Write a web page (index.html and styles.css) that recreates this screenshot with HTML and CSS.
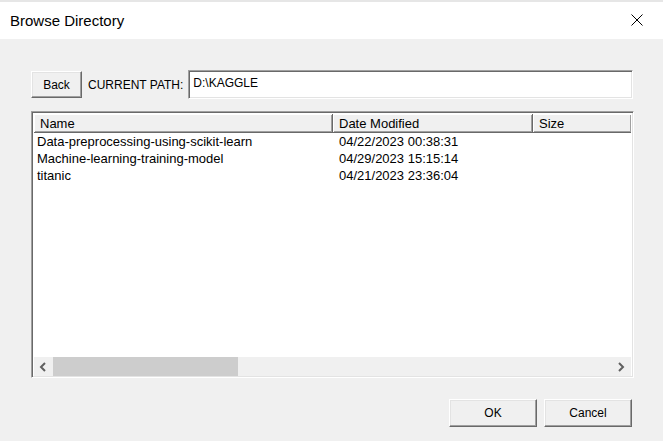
FILE: index.html
```html
<!DOCTYPE html>
<html>
<head>
<meta charset="utf-8">
<link rel="stylesheet" href="styles.css">
</head>
<body>
<div class="window">
  <div class="titlebar">
    <span class="title">Browse Directory</span>
    <svg class="close" width="12" height="12" viewBox="0 0 12 12"><path d="M0.5 0.5 L11.5 11.5 M11.5 0.5 L0.5 11.5" stroke="#000" stroke-width="1" fill="none"/></svg>
  </div>
  <div class="content">
    <div class="pathrow">
      <button class="btn back">Back</button>
      <span class="label">CURRENT PATH:</span>
      <div class="pathbox">D:\KAGGLE</div>
    </div>
    <div class="listview">
      <div class="header">
        <div class="col c-name">Name</div>
        <div class="col c-date">Date Modified</div>
        <div class="col c-size">Size</div>
      </div>
      <div class="rows">
        <div class="row"><span class="c-name">Data-preprocessing-using-scikit-learn</span><span class="c-date">04/22/2023 00:38:31</span></div>
        <div class="row"><span class="c-name">Machine-learning-training-model</span><span class="c-date">04/29/2023 15:15:14</span></div>
        <div class="row"><span class="c-name">titanic</span><span class="c-date">04/21/2023 23:36:04</span></div>
      </div>
      <div class="hscroll">
        <svg class="arrow" width="8" height="10" viewBox="0 0 8 10"><path d="M6 1 L2 5 L6 9" stroke="#606060" stroke-width="2" fill="none"/></svg>
        <div class="track"><div class="thumb"></div></div>
        <svg class="arrow" width="8" height="10" viewBox="0 0 8 10"><path d="M2 1 L6 5 L2 9" stroke="#606060" stroke-width="2" fill="none"/></svg>
      </div>
    </div>
    <div class="footer">
      <button class="btn ok">OK</button>
      <button class="btn cancel">Cancel</button>
    </div>
  </div>
</div>
</body>
</html>
```
FILE: styles.css
```css
* { box-sizing: border-box; }
html, body { margin: 0; padding: 0; }
body { width: 663px; height: 441px; overflow: hidden; background: #f0f0f0; }
.window {
  width: 663px; height: 441px;
  display: flex; flex-direction: column;
  font-family: "Liberation Sans", Arial, sans-serif;
  font-size: 12px; color: #000;
}
.titlebar {
  height: 39px; background: #fff;
  border-top: 2px solid #e6e6e6;
  display: flex; align-items: center; justify-content: space-between;
  padding: 0 20px 0 10px;
}
.title { font-size: 15px; padding-bottom: 0; }
.close { margin-bottom: 1px; }
.content {
  flex: 1; background: #f0f0f0;
  padding: 31px 29px 0 31px;
  display: flex; flex-direction: column;
}
.pathrow { display: flex; align-items: center; height: 29px; }
.btn {
  font-family: "Liberation Sans", Arial, sans-serif; font-size: 12px; color: #000;
  background: #f0f0f0;
  border: 1px solid; border-color: #fff #696969 #696969 #fff;
  box-shadow: inset -1px -1px 0 #a0a0a0, inset 1px 1px 0 #e3e3e3;
  padding: 0; margin: 0;
}
.back { width: 51px; height: 27px; }
.label { margin-left: 6px; margin-right: 5px; }
.pathbox {
  flex: 1; height: 29px;
  background: #fff;
  border: 1px solid; border-color: #a0a0a0 #fff #fff #a0a0a0;
  box-shadow: inset 1px 1px 0 #696969, inset -1px -1px 0 #e3e3e3;
  padding: 5px 0 0 4px;
  margin-right: 1px;
}
.listview {
  margin-top: 12px; height: 267px;
  background: #fff;
  border: 1px solid; border-color: #a0a0a0 #fff #fff #a0a0a0;
  box-shadow: inset 1px 1px 0 #696969, inset -1px -1px 0 #e3e3e3;
  padding: 2px 2px 1px 2px;
  display: flex; flex-direction: column;
  font-size: 13px;
}
.header { display: flex; height: 19px; background: #f0f0f0; }
.header .col {
  height: 19px;
  border-right: 1px solid #696969;
  border-bottom: 1px solid #696969;
  box-shadow: inset 1px 1px 0 #fff, inset -1px -1px 0 #a0a0a0;
  padding: 2px 0 0 6px;
  line-height: 15px;
}
.c-name { width: 299px; }
.c-date { width: 200px; }
.c-size { flex: 1; }
.header .c-size { border-right: none; }
.rows { flex: 1; padding-top: 0; }
.row { display: flex; height: 17px; line-height: 17px; }
.row .c-name { padding-left: 3px; }
.row .c-date { padding-left: 6px; }
.hscroll {
  height: 19px; background: #f0f0f0;
  display: flex; align-items: center;
}
.arrow { margin: 0 6px 0 5px; }
.track { flex: 1; height: 19px; }
.thumb { width: 185px; height: 19px; background: #cdcdcd; }
.footer {
  display: flex; justify-content: flex-end; gap: 7px;
  margin-top: 21px; padding-right: 2px;
}
.ok, .cancel { width: 88px; height: 28px; }
```
